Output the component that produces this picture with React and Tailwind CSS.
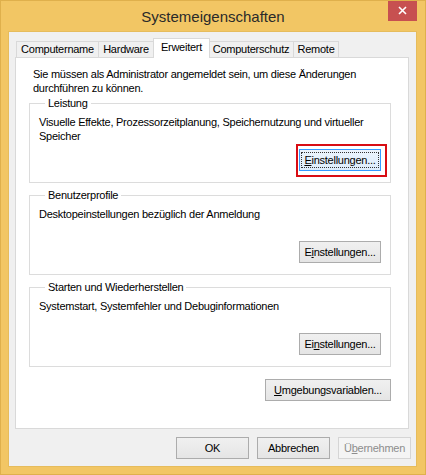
import React from "react";

function Btn({ children, className = "", disabled, focused }) {
  let look = "border-[#acacac] bg-gradient-to-b from-[#f0f0f0] to-[#e5e5e5] text-black";
  if (disabled) look = "border-[#d5d5d5] bg-[#f4f4f4] text-[#8d8d8d]";
  if (focused) look = "border-[#3399ff] bg-gradient-to-b from-[#ecf4fc] to-[#dcecfc] text-black";
  return (
    <div className={`border flex items-center justify-center h-[22px] ${look} ${className}`}>
      {focused ? (
        <span className="border border-dotted border-[#333] px-[2px] leading-[14px]">{children}</span>
      ) : (
        <span className="leading-[14px]">{children}</span>
      )}
    </div>
  );
}

function GroupBox({ title, text, accel, highlight }) {
  return (
    <fieldset className="border border-[#dcdcdc] ml-[13px] mr-[17px] px-[9px] h-[87px]">
      <legend className="ml-[6px] px-[3px] leading-[14px]">{title}</legend>
      <div className="flex flex-col h-[72px] pt-[5px]">
        <p className="leading-[14px]">{text}</p>
        <div className="mt-auto mb-[11px] flex justify-end">
          <div className="relative">
            {highlight && (
              <div className="absolute left-[-3px] right-[-6px] top-[-5px] bottom-[-6px] border-2 border-[#d80d14]" />
            )}
            <Btn className="w-[82px]" focused={highlight}>
              {accel}
            </Btn>
          </div>
        </div>
      </div>
    </fieldset>
  );
}

export default function App() {
  const tabs = [
    { label: "Computername", w: "w-[83px]" },
    { label: "Hardware", w: "w-[56px]" },
    { label: "Erweitert", w: "w-[57px]", active: true },
    { label: "Computerschutz", w: "w-[86px]" },
    { label: "Remote", w: "w-[46px]" },
  ];

  return (
    <div className="w-[426px] h-[475px] bg-[#f2c664] border border-[#dfb04c] flex flex-col px-[7px] pb-[7px] font-['Liberation_Sans',Arial,sans-serif] text-[11px] tracking-[-0.25px] text-black overflow-hidden">
      {/* title bar */}
      <div className="-mx-[8px] h-[30px] relative flex items-center justify-center">
        <span className="text-[15px] tracking-normal text-[#2a2a2a] leading-none">Systemeigenschaften</span>
        <div className="absolute right-[9px] -top-px w-[29px] h-[21px] bg-[#c75050] flex items-center justify-center">
          <svg width="9" height="9" viewBox="0 0 9 9">
            <path d="M1 1L8 8M8 1L1 8" stroke="white" strokeWidth="1.6" />
          </svg>
        </div>
      </div>

      {/* client area */}
      <div className="flex-1 w-[409px] bg-[#f0f0f0] border border-[#e6bc5c] pl-[6px] pr-[7px] pt-[6px] flex flex-col">
        <div className="flex items-end h-[19px] pl-[1px]">
          {tabs.map((t) =>
            t.active ? (
              <div
                key={t.label}
                className={`${t.w} h-[20px] -mb-px -mx-[1px] relative z-10 bg-white border border-b-0 border-[#d9d9d9] flex items-center justify-center pb-[2px]`}
              >
                {t.label}
              </div>
            ) : (
              <div
                key={t.label}
                className={`${t.w} h-[16px] bg-[#f0f0f0] border border-b-0 border-[#d9d9d9] -ml-px first:ml-0 flex items-center justify-center`}
              >
                {t.label}
              </div>
            )
          )}
        </div>

        <div className="w-[394px] h-[372px] bg-white border border-[#d9d9d9] flex flex-col">
          <p className="pl-[17px] pt-[9px] leading-[14px]">
            Sie müssen als Administrator angemeldet sein, um diese Änderungen
            <br />
            durchführen zu können.
          </p>

          <div className="mt-[1px]">
            <GroupBox
              title="Leistung"
              text={
                <>
                  Visuelle Effekte, Prozessorzeitplanung, Speichernutzung und virtueller
                  <br />
                  Speicher
                </>
              }
              accel={
                <>
                  <u>E</u>instellungen...
                </>
              }
              highlight
            />
          </div>
          <div className="mt-[5px]">
            <GroupBox
              title="Benutzerprofile"
              text="Desktopeinstellungen bezüglich der Anmeldung"
              accel={
                <>
                  E<u>i</u>nstellungen...
                </>
              }
            />
          </div>
          <div className="mt-[5px]">
            <GroupBox
              title="Starten und Wiederherstellen"
              text="Systemstart, Systemfehler und Debuginformationen"
              accel={
                <>
                  Ei<u>n</u>stellungen...
                </>
              }
            />
          </div>

          <div className="flex justify-end mr-[17px] mt-[12px]">
            <Btn className="w-[126px]">
              <u>U</u>mgebungsvariablen...
            </Btn>
          </div>
        </div>

        <div className="flex justify-end gap-[8px] mt-[8px] -mr-[2px]">
          <Btn className="w-[73px] h-[21px]">OK</Btn>
          <Btn className="w-[73px] h-[21px]">Abbrechen</Btn>
          <Btn className="w-[73px] h-[21px]" disabled>
            Ü<u>b</u>ernehmen
          </Btn>
        </div>
      </div>
    </div>
  );
}
